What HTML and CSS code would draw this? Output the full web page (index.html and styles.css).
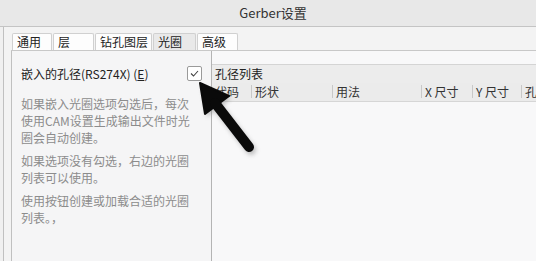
FILE: index.html
```html
<!DOCTYPE html>
<html>
<head>
    <meta charset="UTF-8" />
    <link rel="stylesheet" href="styles.css">
</head>
<body>
    <div class="titlebar">Gerber设置</div>
    <div class="frame">
        <div class="dialog">
            <div class="tabs">
                <div class="tab">通用</div>
                <div class="tab">层</div>
                <div class="tab">钻孔图层</div>
                <div class="tab current">光圈</div>
                <div class="tab">高级</div>
            </div>
            <div class="page">
                <div class="left">
                    <div class="option">
                        <span class="label">嵌入的孔径(RS274X) (<u>E</u>)</span>
                        <span class="check">
                            <svg width="9" height="7" viewBox="0 0 9 7"><path d="M1 3.5 L3.5 6 L8 1" fill="none" stroke="#444" stroke-width="1.1"/></svg>
                        </span>
                    </div>
                    <p class="hint">如果嵌入光圈选项勾选后，每次使用CAM设置生成输出文件时光圈会自动创建。</p>
                    <p class="hint">如果选项没有勾选，右边的光圈列表可以使用。</p>
                    <p class="hint">使用按钮创建或加载合适的光圈列表。，</p>
                </div>
                <div class="right">
                    <div class="listhead">孔径列表</div>
                    <div class="cols">
                        <div class="col c-code">代码</div>
                        <div class="col c-shape">形状</div>
                        <div class="col c-use">用法</div>
                        <div class="col c-x">X 尺寸</div>
                        <div class="col c-y">Y 尺寸</div>
                        <div class="col c-hole">孔</div>
                    </div>
                </div>
            </div>
        </div>
        <div class="edge"></div>
    </div>
    <svg class="pointer" width="536" height="261" viewBox="0 0 536 261">
        <defs>
            <filter id="soft" x="-20%" y="-20%" width="140%" height="140%">
                <feGaussianBlur stdDeviation="2"/>
            </filter>
        </defs>
        <g fill="#888" stroke="#888" opacity="0.5" filter="url(#soft)" transform="translate(2,3)">
            <polygon points="200,83 229,96 205,114" stroke="none"/>
            <line x1="215" y1="103" x2="249" y2="147" stroke-width="10" stroke-linecap="round"/>
        </g>
        <g fill="#0a0a0a" stroke="#0a0a0a">
            <polygon points="200,83 229,96 205,114" stroke-linejoin="round" stroke-width="2"/>
            <line x1="215" y1="103" x2="249" y2="147" stroke-width="10" stroke-linecap="round"/>
        </g>
    </svg>
</body>
</html>
```

FILE: styles.css
```css
html, body {
    margin: 0;
    padding: 0;
}

body {
    width: 536px;
    height: 261px;
    overflow: hidden;
    position: relative;
    background: #f0f0f0;
    font-family: "Noto Sans CJK SC", "Noto Sans", sans-serif;
    font-size: 12px;
    color: #222;
}

.titlebar {
    height: 27px;
    line-height: 26px;
    background: #e8e8e8;
    border-bottom: 1px solid #c4c4c4;
    box-sizing: border-box;
    text-align: center;
    padding-left: 10px;
    font-size: 13px;
    color: #333;
}

.frame {
    display: flex;
    height: 234px;
}

.dialog {
    flex: 1;
    margin-left: 3px;
    border-left: 1px solid #c0c0c0;
    padding-left: 7px;
    display: flex;
    flex-direction: column;
    background: #f3f3f3;
}

.edge {
    width: 6px;
    background: #111;
}

.tabs {
    display: flex;
    padding-top: 6px;
    padding-left: 1px;
    height: 23px;
    box-sizing: border-box;
}

.tab {
    height: 17px;
    line-height: 16px;
    box-sizing: border-box;
    border: 1px solid #d0d0d0;
    border-bottom: none;
    border-radius: 2px 2px 0 0;
    background: #fdfdfd;
    padding-left: 4px;
    margin-right: 1px;
    color: #222;
}

.tab:nth-child(1) { width: 40px; }
.tab:nth-child(2) { width: 41px; }
.tab:nth-child(3) { width: 57px; }
.tab:nth-child(4) { width: 43px; }
.tab:nth-child(5) { width: 41px; }

.tab.current {
    background: #e9e9e9;
}

.page {
    flex: 1;
    display: flex;
    border-top: 1px solid #c8c8c8;
}

.left {
    width: 201px;
    box-sizing: border-box;
    border-left: 1px solid #c0c0c0;
    border-right: 1px solid #b4b4b4;
    background: #f5f5f6;
    padding: 14px 9px 0 9px;
}

.option {
    display: flex;
    align-items: center;
    justify-content: space-between;
    height: 16px;
}

.label {
    color: #222;
    font-size: 12px;
}

.check {
    width: 15px;
    height: 15px;
    box-sizing: border-box;
    border: 1px solid #9a9a9a;
    border-radius: 2px;
    background: #fff;
    display: flex;
    align-items: center;
    justify-content: center;
}

.hint {
    margin: 14px 0 0 0;
    line-height: 17px;
    color: #8c8c8c;
    width: 172px;
}

.hint + .hint {
    margin-top: 6px;
}

.right {
    flex: 1;
    background: #f8f8f9;
    padding-top: 13px;
}

.listhead {
    height: 19px;
    line-height: 18px;
    box-sizing: border-box;
    border-top: 1px solid #d4d4d4;
    background: #ececec;
    padding-left: 3px;
    color: #222;
}

.cols {
    display: flex;
    height: 18px;
    background: #ebebeb;
    border-bottom: 1px solid #d6d6d6;
    overflow: hidden;
    white-space: nowrap;
}

.col {
    padding-left: 3px;
    box-sizing: border-box;
    border-left: 1px solid #c8c8c8;
    height: 13px;
    margin-top: 2px;
    line-height: 13px;
    color: #333;
}

.col.c-code { width: 39px; border-left: none; }
.col.c-shape { width: 81px; }
.col.c-use { width: 89px; }
.col.c-x { width: 51px; }
.col.c-y { width: 49px; }
.col.c-hole { flex: 1; }

.pointer {
    position: absolute;
    left: 0;
    top: 0;
    pointer-events: none;
}
```
